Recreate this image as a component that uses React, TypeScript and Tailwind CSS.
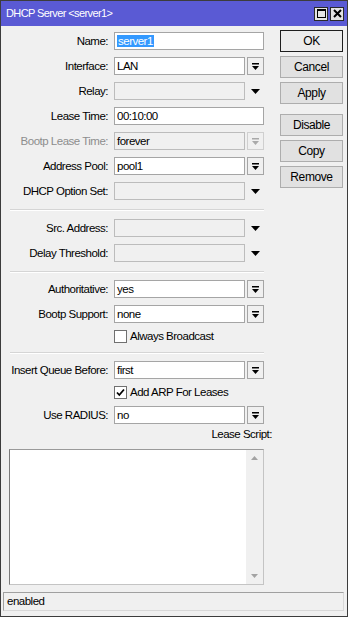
import type { ReactNode } from "react";

const font = "font-['Liberation_Sans',Arial,sans-serif]";

function DropIcon({ muted }: { muted?: boolean }) {
  const c = muted ? "#a9a9a9" : "#000";
  return (
    <svg width="9" height="9" viewBox="0 0 9 9">
      <rect x="1" y="1" width="7" height="1.5" fill={c} />
      <path d="M1 4h7l-3.5 4z" fill={c} />
    </svg>
  );
}

function Arrow() {
  return (
    <svg width="9" height="5" viewBox="0 0 9 5">
      <path d="M0 0h9l-4.5 5z" fill="#000" />
    </svg>
  );
}

function Row({ label, muted, className, children }: { label: string; muted?: boolean; className?: string; children: ReactNode }) {
  return (
    <div className={`flex h-[18px] items-center ${className ?? ""}`}>
      <div className={`w-[99px] whitespace-nowrap text-right leading-[18px] ${muted ? "text-[#8d8d8d]" : "text-black"}`}>{label}</div>
      <div className="ml-[6px] flex h-full flex-1">{children}</div>
    </div>
  );
}

function Input({ value, wide, disabled, selected }: { value?: string; wide?: boolean; disabled?: boolean; selected?: boolean }) {
  return (
    <div
      className={`h-full border pl-[2px] leading-[16px] ${wide ? "w-[150px]" : "w-[131px]"} ${
        disabled ? "border-[#bcbcbc] bg-[#f0f0f0]" : "border-[#a5a5a5] bg-white"
      }`}
    >
      {selected ? <span className="bg-[#3399ff] px-[1px] text-white">{value}</span> : value}
    </div>
  );
}

function DropBtn({ muted }: { muted?: boolean }) {
  return (
    <div className={`ml-[2px] flex h-full w-[17px] items-center justify-center border ${muted ? "border-[#cfcfcf]" : "border-[#a5a5a5]"} bg-[#f0f0f0]`}>
      <DropIcon muted={muted} />
    </div>
  );
}

function ArrowSlot() {
  return (
    <div className="ml-[2px] flex h-full w-[17px] items-center justify-center">
      <Arrow />
    </div>
  );
}

function Sep({ className }: { className?: string }) {
  return <div className={`ml-[1px] h-[2px] border-t border-b border-t-[#d5d5d5] border-b-white ${className ?? ""}`} />;
}

function Check({ label, checked, className }: { label: string; checked?: boolean; className?: string }) {
  return (
    <div className={`flex h-[15px] items-center ${className ?? ""}`}>
      <div className="ml-[105px] flex h-[13px] w-[13px] items-center justify-center border border-[#707070] bg-white">
        {checked && (
          <svg width="9" height="9" viewBox="0 0 9 9">
            <path d="M1 4.5l2.3 2.5L8 1.5" stroke="#000" strokeWidth="1.8" fill="none" />
          </svg>
        )}
      </div>
      <span className="ml-[3px] whitespace-nowrap leading-[15px]">{label}</span>
    </div>
  );
}

function Btn({ children, primary, className }: { children: ReactNode; primary?: boolean; className?: string }) {
  return (
    <div
      className={`flex h-[22px] items-center justify-center border ${
        primary ? "border-[#1e1e1e] bg-[#ececec]" : "border-[#adadad] bg-[#e1e1e1]"
      } ${className ?? ""}`}
    >
      {children}
    </div>
  );
}

export default function App() {
  return (
    <div className={`${font} flex h-[617px] w-[348px] flex-col overflow-hidden border border-[#3c3c3c] bg-[#f0f0f0] text-[11.5px] tracking-[-0.5px] text-black`}>
      <div className="flex h-[25px] shrink-0 items-center bg-[#5a5ad4] pl-[5px] pr-[3px] text-white">
        <span className="flex-1 whitespace-nowrap text-[11px] tracking-[-0.6px]">DHCP Server &lt;server1&gt;</span>
        <div className="flex h-[14px] w-[14px] items-center justify-center border border-[#2a2a2a] bg-[#e4e4e4]">
          <div className="h-[9px] w-[9px] border border-t-2 border-[#000]" />
        </div>
        <div className="ml-[2px] flex h-[14px] w-[14px] items-center justify-center border border-[#2a2a2a] bg-[#e4e4e4]">
          <svg width="9" height="9" viewBox="0 0 9 9">
            <path d="M1 1l7 7M8 1L1 8" stroke="#000" strokeWidth="2" />
          </svg>
        </div>
      </div>

      <div className="flex flex-1 flex-col pt-[4px]">
        <div className="flex pl-[8px]">
          <div className="flex w-[255px] flex-col pt-[2px]">
            <Row label="Name:">
              <Input value="server1" wide selected />
            </Row>
            <Row label="Interface:" className="mt-[7px]">
              <Input value="LAN" />
              <DropBtn />
            </Row>
            <Row label="Relay:" className="mt-[7px]">
              <Input disabled />
              <ArrowSlot />
            </Row>
            <Row label="Lease Time:" className="mt-[7px]">
              <Input value="00:10:00" wide />
            </Row>
            <Row label="Bootp Lease Time:" muted className="mt-[7px]">
              <Input value="forever" disabled />
              <DropBtn muted />
            </Row>
            <Row label="Address Pool:" className="mt-[7px]">
              <Input value="pool1" />
              <DropBtn />
            </Row>
            <Row label="DHCP Option Set:" className="mt-[7px]">
              <Input disabled />
              <ArrowSlot />
            </Row>

            <Sep className="mt-[9px]" />

            <Row label="Src. Address:" className="mt-[8px]">
              <Input disabled />
              <ArrowSlot />
            </Row>
            <Row label="Delay Threshold:" className="mt-[7px]">
              <Input disabled />
              <ArrowSlot />
            </Row>

            <Sep className="mt-[9px]" />

            <Row label="Authoritative:" className="mt-[7px]">
              <Input value="yes" />
              <DropBtn />
            </Row>
            <Row label="Bootp Support:" className="mt-[7px]">
              <Input value="none" />
              <DropBtn />
            </Row>
            <Check label="Always Broadcast" className="mt-[6px]" />

            <Sep className="mt-[8px]" />

            <Row label="Insert Queue Before:" className="mt-[7px]">
              <Input value="first" />
              <DropBtn />
            </Row>
            <Check label="Add ARP For Leases" checked className="mt-[6px]" />
            <Row label="Use RADIUS:" className="mt-[6px]">
              <Input value="no" />
              <DropBtn />
            </Row>

            <div className="mr-[-8px] mt-[2px] h-[16px] text-right leading-[16px]">Lease Script:</div>

            <div className="mt-[7px] flex h-[136px] border border-[#c4c4c4] border-l-[#7a7a7a] border-t-[#9a9a9a] bg-white">
              <div className="flex-1" />
              <div className="flex w-[17px] flex-col items-center justify-between bg-[#f0f0f0] py-[6px]">
                <svg width="7" height="4" viewBox="0 0 7 4">
                  <path d="M0 4h7L3.5 0z" fill="#a3a3a3" />
                </svg>
                <svg width="7" height="4" viewBox="0 0 7 4">
                  <path d="M0 0h7L3.5 4z" fill="#a3a3a3" />
                </svg>
              </div>
            </div>
          </div>

          <div className="ml-[16px] flex w-[63px] flex-col text-[12px] tracking-[-0.4px]">
            <Btn primary>OK</Btn>
            <Btn className="mt-[4px]">Cancel</Btn>
            <Btn className="mt-[4px]">Apply</Btn>
            <Btn className="mt-[10px]">Disable</Btn>
            <Btn className="mt-[4px]">Copy</Btn>
            <Btn className="mt-[4px]">Remove</Btn>
          </div>
        </div>

        <div className="mb-[4px] ml-[2px] mr-[3px] mt-[7px] h-[19px] border border-[#a0a0a0] border-b-[#d8d8d8] border-r-[#d8d8d8] pl-[3px] leading-[17px]">
          enabled
        </div>
      </div>
    </div>
  );
}
